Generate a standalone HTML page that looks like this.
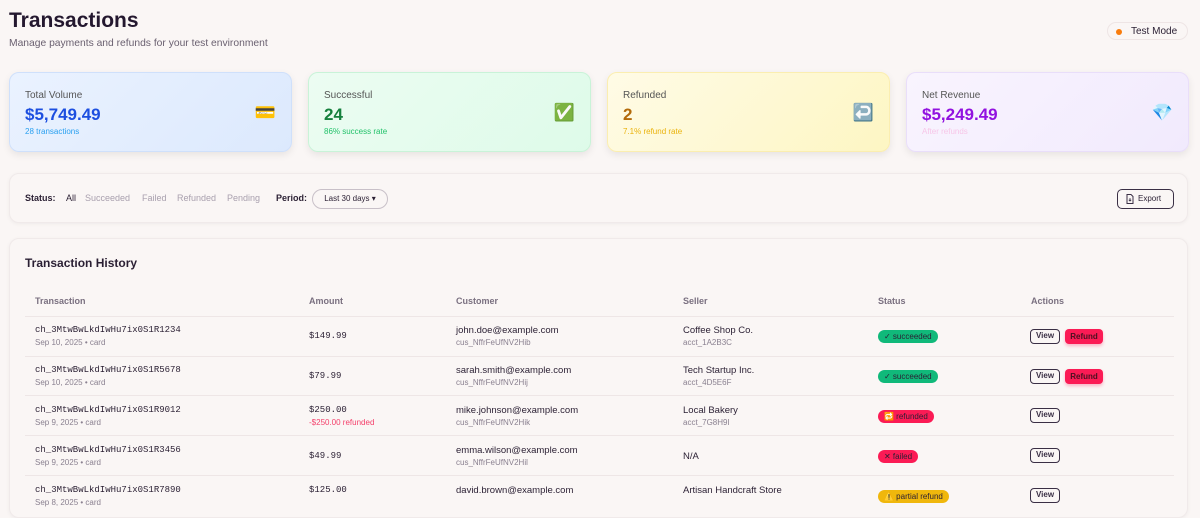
<!DOCTYPE html>
<html><head><meta charset="utf-8"><style>
*{margin:0;padding:0;box-sizing:border-box}
body{width:1200px;height:500px;overflow:hidden;background:#faf6f5;font-family:"Liberation Sans",sans-serif;color:#2a1f33;position:relative}
.a{position:absolute;white-space:nowrap}
.card{position:absolute;top:72px;width:283px;height:80px;border-radius:10px;box-shadow:0 3px 8px rgba(0,0,0,.08)}
.card .l{position:absolute;left:15px;top:17px;font-size:10px;color:#555}
.card .v{position:absolute;left:15px;top:32px;font-size:17px;font-weight:bold}
.card .s{position:absolute;left:15px;top:54px;font-size:8px}
.card .i{position:absolute;right:15px;top:30px;font-size:17px}
.panel{position:absolute;left:9px;width:1179px;background:#faf6f5;border:1px solid #f0eaea;border-radius:10px;box-shadow:0 1px 4px rgba(0,0,0,.05)}
.mono{font-family:"Liberation Mono",monospace;font-size:9px;color:#2a1f33}
.sub{font-size:8px;color:#8a8090}
.th{font-size:9px;color:#7a7080;font-weight:bold}
.line{position:absolute;left:25px;width:1149px;height:1px;background:#eee6e6}
.badge{position:absolute;height:13px;border-radius:7px;font-size:8px;line-height:13px;padding:0 6px;color:#2a1f33}
.btn{position:absolute;height:15px;border-radius:4px;font-size:8px;text-align:center;font-weight:bold}
.view{width:30px;border:1.5px solid #3a2f45;color:#3a2f45;line-height:12px}
.ref{width:38px;background:#fb1b55;color:#4a1020;line-height:15px;box-shadow:0 2px 3px rgba(251,27,85,.3)}
.f{font-size:9px;color:#a9a0ae}
</style></head><body>
<div class="a" style="left:9px;top:9px;font-size:21px;font-weight:bold;color:#24182f">Transactions</div>
<div class="a" style="left:9px;top:38px;font-size:10.3px;color:#6a6070">Manage payments and refunds for your test environment</div>
<div class="a" style="left:1107px;top:22px;width:81px;height:18px;border:1px solid #eee5e5;border-radius:9px;font-size:10px;line-height:17px;padding-left:23px;color:#2a1f33"><span style="position:absolute;left:8px;top:5.5px;width:6px;height:6px;border-radius:3px;background:#f97c0c"></span>Test Mode</div>

<div class="card" style="left:9px;background:linear-gradient(135deg,#eaf2ff,#dce9fd);border:1px solid #cfe0fb"><div class="l">Total Volume</div><div class="v" style="color:#1d4fe0">$5,749.49</div><div class="s" style="color:#29a0f0">28 transactions</div><div class="i">💳</div></div>
<div class="card" style="left:308px;background:linear-gradient(135deg,#ecfcf2,#defbe9);border:1px solid #c9f3d8"><div class="l">Successful</div><div class="v" style="color:#16803d">24</div><div class="s" style="color:#22c26a">86% success rate</div><div class="i">✅</div></div>
<div class="card" style="left:607px;background:linear-gradient(135deg,#fffbe6,#fdf6c3);border:1px solid #fbeeb0"><div class="l">Refunded</div><div class="v" style="color:#b36a0a">2</div><div class="s" style="color:#eab30c">7.1% refund rate</div><div class="i">↩️</div></div>
<div class="card" style="left:906px;background:linear-gradient(135deg,#f9f4fe,#f1eafd);border:1px solid #e9defa"><div class="l">Net Revenue</div><div class="v" style="color:#9212e0">$5,249.49</div><div class="s" style="color:#f7c6e8">After refunds</div><div class="i">💎</div></div>

<div class="panel" style="top:173px;height:50px">
<div class="a" style="left:15px;top:19px;font-size:9px;font-weight:bold">Status:</div>
<div class="a" style="left:56px;top:19px;font-size:9px;color:#2a1f33">All</div>
<div class="a f" style="left:75px;top:19px">Succeeded</div>
<div class="a f" style="left:132px;top:19px">Failed</div>
<div class="a f" style="left:167px;top:19px">Refunded</div>
<div class="a f" style="left:217px;top:19px">Pending</div>
<div class="a" style="left:266px;top:19px;font-size:9px;font-weight:bold">Period:</div>
<div class="a" style="left:302px;top:15px;width:76px;height:20px;border:1px solid #c8c0c8;border-radius:10px;font-size:8px;line-height:18px;text-align:center">Last 30 days ▾</div>
<div class="a" style="left:1107px;top:15px;width:57px;height:20px;border:1.5px solid #3a2f45;border-radius:5px;font-size:8px;line-height:17px;padding-left:20px">Export<svg style="position:absolute;left:8px;top:4px" width="8" height="10" viewBox="0 0 8 10"><path d="M1 .5h4l2 2v7H1z" fill="none" stroke="#3a2f45" stroke-width="1"/><path d="M4 4v3M2.8 5.8L4 7l1.2-1.2" fill="none" stroke="#3a2f45" stroke-width=".8"/></svg></div>
</div>

<div class="panel" style="top:238px;height:280px;left:9px"></div>
<div class="a" style="left:25px;top:256px;font-size:12px;font-weight:bold">Transaction History</div>
<div class="a th" style="left:35px;top:296px">Transaction</div>
<div class="a th" style="left:309px;top:296px">Amount</div>
<div class="a th" style="left:456px;top:296px">Customer</div>
<div class="a th" style="left:683px;top:296px">Seller</div>
<div class="a th" style="left:878px;top:296px">Status</div>
<div class="a th" style="left:1031px;top:296px">Actions</div>
<div class="line" style="top:316px"></div>
<div class="line" style="top:356px"></div>
<div class="line" style="top:395px"></div>
<div class="line" style="top:435px"></div>
<div class="line" style="top:475px"></div>

<div class="a mono" style="left:35px;top:325px">ch_3MtwBwLkdIwHu7ix0S1R1234</div><div class="a sub" style="left:35px;top:338px">Sep 10, 2025 • card</div>
<div class="a mono" style="left:309px;top:331px">$149.99</div>
<div class="a" style="left:456px;top:325px;font-size:9.5px">john.doe@example.com</div><div class="a sub" style="left:456px;top:338px">cus_NffrFeUfNV2Hib</div>
<div class="a" style="left:683px;top:325px;font-size:9.5px">Coffee Shop Co.</div><div class="a sub" style="left:683px;top:338px">acct_1A2B3C</div>
<div class="badge" style="left:878px;top:330px;background:#10b97a">✓ succeeded</div>
<div class="btn view" style="left:1030px;top:329px">View</div><div class="btn ref" style="left:1065px;top:329px">Refund</div>

<div class="a mono" style="left:35px;top:365px">ch_3MtwBwLkdIwHu7ix0S1R5678</div><div class="a sub" style="left:35px;top:378px">Sep 10, 2025 • card</div>
<div class="a mono" style="left:309px;top:371px">$79.99</div>
<div class="a" style="left:456px;top:365px;font-size:9.5px">sarah.smith@example.com</div><div class="a sub" style="left:456px;top:378px">cus_NffrFeUfNV2Hij</div>
<div class="a" style="left:683px;top:365px;font-size:9.5px">Tech Startup Inc.</div><div class="a sub" style="left:683px;top:378px">acct_4D5E6F</div>
<div class="badge" style="left:878px;top:370px;background:#10b97a">✓ succeeded</div>
<div class="btn view" style="left:1030px;top:369px">View</div><div class="btn ref" style="left:1065px;top:369px">Refund</div>

<div class="a mono" style="left:35px;top:405px">ch_3MtwBwLkdIwHu7ix0S1R9012</div><div class="a sub" style="left:35px;top:418px">Sep 9, 2025 • card</div>
<div class="a mono" style="left:309px;top:405px">$250.00</div><div class="a" style="left:309px;top:418px;font-size:8px;color:#f43f6a">-$250.00 refunded</div>
<div class="a" style="left:456px;top:405px;font-size:9.5px">mike.johnson@example.com</div><div class="a sub" style="left:456px;top:418px">cus_NffrFeUfNV2Hik</div>
<div class="a" style="left:683px;top:405px;font-size:9.5px">Local Bakery</div><div class="a sub" style="left:683px;top:418px">acct_7G8H9I</div>
<div class="badge" style="left:878px;top:410px;background:#fb1b55">🔁 refunded</div>
<div class="btn view" style="left:1030px;top:408px">View</div>

<div class="a mono" style="left:35px;top:445px">ch_3MtwBwLkdIwHu7ix0S1R3456</div><div class="a sub" style="left:35px;top:458px">Sep 9, 2025 • card</div>
<div class="a mono" style="left:309px;top:451px">$49.99</div>
<div class="a" style="left:456px;top:445px;font-size:9.5px">emma.wilson@example.com</div><div class="a sub" style="left:456px;top:458px">cus_NffrFeUfNV2Hil</div>
<div class="a" style="left:683px;top:451px;font-size:9.5px">N/A</div>
<div class="badge" style="left:878px;top:450px;background:#fb1b55">✕ failed</div>
<div class="btn view" style="left:1030px;top:448px">View</div>

<div class="a mono" style="left:35px;top:485px">ch_3MtwBwLkdIwHu7ix0S1R7890</div><div class="a sub" style="left:35px;top:498px">Sep 8, 2025 • card</div>
<div class="a mono" style="left:309px;top:485px">$125.00</div>
<div class="a" style="left:456px;top:485px;font-size:9.5px">david.brown@example.com</div>
<div class="a" style="left:683px;top:485px;font-size:9.5px">Artisan Handcraft Store</div>
<div class="badge" style="left:878px;top:490px;background:#f0b70c">⚠️ partial refund</div>
<div class="btn view" style="left:1030px;top:488px">View</div>
</body></html>
